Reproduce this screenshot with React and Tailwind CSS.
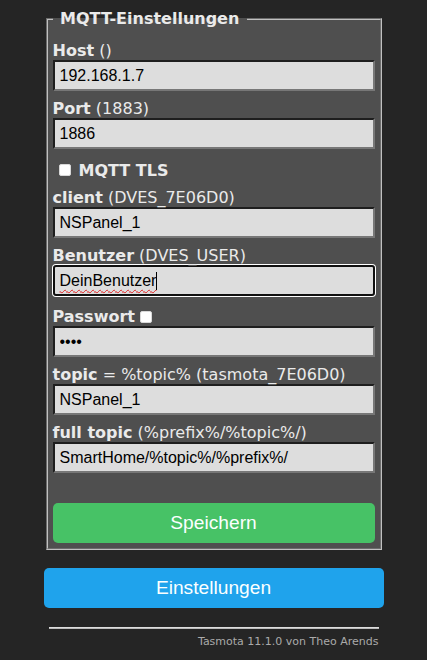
import { useState } from "react";

// Tasmota-style MQTT settings page (dark theme)
const inputCls =
  "block w-full h-[31px] px-[5px] bg-[#dddddd] text-black text-[16px] font-['Liberation_Sans',Arial,sans-serif] border-2 border-t-[#1e1e1e] border-l-[#1e1e1e] border-r-[#777777] border-b-[#777777] outline-none";

const btnCls =
  "block w-full h-[40px] rounded-[5px] text-[#faffff] text-[19.2px] font-['Liberation_Sans',Arial,sans-serif]";

const checkCls =
  "appearance-none inline-block w-[12px] h-[12px] bg-white rounded-[2px] border border-[#d8d8d8] align-[-1px]";

function Field({ label, hint, value, type = "text" }) {
  return (
    <div>
      <div className="h-[19px] leading-[19px] whitespace-nowrap">
        <b>{label}</b>
        {hint}
      </div>
      <input
        className={inputCls}
        type={type}
        defaultValue={value}
        readOnly
        spellCheck={false}
      />
    </div>
  );
}

export default function App() {
  const [tls, setTls] = useState(false);
  const [showPw, setShowPw] = useState(false);

  return (
    <div className="min-h-screen bg-[#252525] text-[#eaeaea] text-[16px] font-['DejaVu_Sans',Verdana,sans-serif]">
      <div className="w-[340px] mx-auto pt-[9px]">
        <fieldset className="mx-[2px] p-[5px] bg-[#4f4f4f] border-2 [border-style:groove] border-[#c0c0c0]">
          <legend className="px-[2px] leading-[20px] font-bold">
            {"\u00a0MQTT-Einstellungen\u00a0"}
          </legend>
          <form
            className="pt-[7px] flex flex-col gap-[8px]"
            onSubmit={(e) => e.preventDefault()}
          >
            <Field label="Host" hint=" ()" value="192.168.1.7" />
            <Field label="Port" hint=" (1883)" value="1886" />

            <label className="h-[23px] pt-[3px] leading-[19px] flex items-center">
              <input
                type="checkbox"
                className={checkCls + " ml-[6px] mr-[8px]"}
                checked={tls}
                onChange={() => setTls(!tls)}
              />
              <b>MQTT TLS</b>
            </label>

            <Field label="client" hint=" (DVES_7E06D0)" value="NSPanel_1" />

            <div>
              <div className="h-[19px] leading-[19px]">
                <b>Benutzer</b> (DVES_USER)
              </div>
              <div className="flex items-center h-[31px] px-[5px] bg-[#dddddd] text-black rounded-[3px] border-2 border-[#101010] shadow-[0_0_0_1px_#ffffff] font-['Liberation_Sans',Arial,sans-serif]">
                <span className="underline decoration-wavy decoration-[#e02020] decoration-1 underline-offset-[3px]">
                  DeinBenutzer
                </span>
                <span className="inline-block w-px h-[18px] bg-black" />
              </div>
            </div>

            <div>
              <label className="h-[22px] pt-[3px] leading-[19px] flex items-center">
                <b>Passwort</b>
                <input
                  type="checkbox"
                  className={checkCls + " ml-[5px]"}
                  checked={showPw}
                  onChange={() => setShowPw(!showPw)}
                />
              </label>
              <input
                className={inputCls}
                type={showPw ? "text" : "password"}
                defaultValue="1234"
                readOnly
              />
            </div>

            <Field
              label="topic"
              hint=" = %topic% (tasmota_7E06D0)"
              value="NSPanel_1"
            />
            <Field
              label="full topic"
              hint=" (%prefix%/%topic%/)"
              value="SmartHome/%topic%/%prefix%/"
            />

            <button
              type="submit"
              className={btnCls + " mt-[22px] bg-[#47c266]"}
            >
              Speichern
            </button>
          </form>
        </fieldset>

        <button type="button" className={btnCls + " mt-[18px] bg-[#1fa3ec]"}>
          Einstellungen
        </button>

        <div className="px-[5px] text-right text-[11px] text-[#aaaaaa]">
          <div className="mt-[19px] h-[2px] border-t border-b border-t-[#dddddd] border-b-[#bbbbbb]" />
          <div className="mt-[6px] leading-[13px]">Tasmota 11.1.0 von Theo Arends</div>
        </div>
      </div>
    </div>
  );
}
